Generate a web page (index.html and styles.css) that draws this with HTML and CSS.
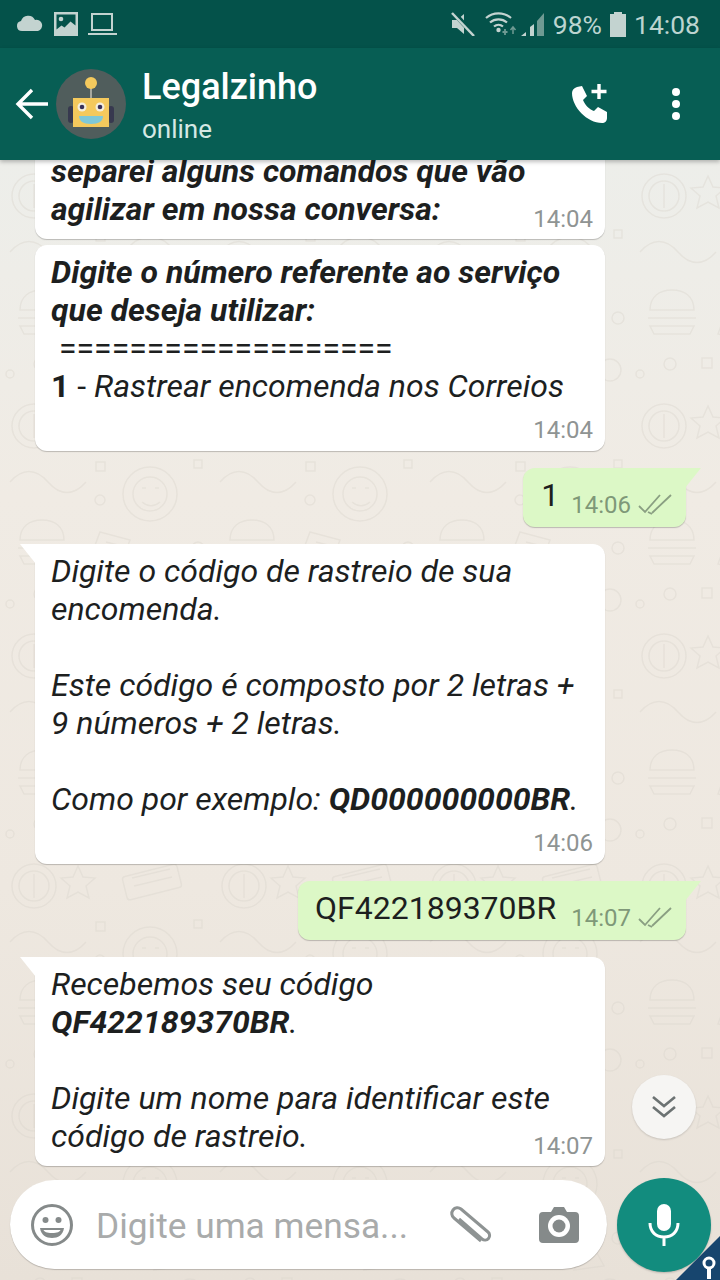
FILE: index.html
```html
<!DOCTYPE html>
<html lang="pt-BR">
<head>
  <meta charset="UTF-8">
  <meta name="viewport" content="width=device-width, initial-scale=1">
  <title>Legalzinho</title>
  <link rel="stylesheet" href="styles.css">
</head>
<body>

<div class="phone">
  <!-- status bar -->
  <div class="status-bar">
    <div class="status-left">
      <svg width="28" height="18" viewBox="0 0 28 18"><path d="M6 16a5 5 0 0 1-1-9.900A7.500 7.500 0 0 1 19 5a5.600 5.600 0 0 1 3 11z" fill="#c3d3d0"/></svg>
      <svg width="24" height="24" viewBox="0 0 24 24"><path d="M0 0h24v24H0z" fill="#c3d3d0"/><path d="M2.500 2.500h19v11l-5-4-6 6-3-2-5 4z" fill="#04524a"/><circle cx="7" cy="7" r="2.300" fill="#c3d3d0"/></svg>
      <svg width="29" height="24" viewBox="0 0 29 24"><path d="M4 2h20v16H4z" fill="none" stroke="#c3d3d0" stroke-width="2"/><path d="M0 22h29" stroke="#c3d3d0" stroke-width="2"/></svg>
    </div>
    <div class="status-right">
      <svg class="icon-mute" width="24" height="24" viewBox="0 0 24 24"><path d="M1 8h5l7-6v20l-7-6H1z" fill="#c3d3d0"/><path d="M2 0l21 23" stroke="#04524a" stroke-width="5"/><path d="M1 1l22 23" stroke="#c3d3d0" stroke-width="2.500"/></svg>
      <svg class="icon-wifi" width="32" height="26" viewBox="0 0 32 26"><g fill="none" stroke="#c3d3d0" stroke-width="2.200"><path d="M1 7a19 19 0 0 1 25 0"/><path d="M5 11.500a13 13 0 0 1 17 0"/><path d="M9 15.500a7 7 0 0 1 9 0"/></g><circle cx="13.500" cy="19" r="2.200" fill="#c3d3d0"/><path d="M20 18v6M17.500 21h5" stroke="#6f9a93" stroke-width="1.800"/><path d="M28 16v7M25.500 19l2.500-3 2.500 3" fill="none" stroke="#6f9a93" stroke-width="1.500"/></svg>
      <svg class="icon-signal" width="24" height="26" viewBox="0 0 24 26"><path d="M0 25l5-4v4z" fill="#c3d3d0"/><path d="M9 25v-9l4-3v12z" fill="#c3d3d0"/><path d="M16 25V10l7-8v23z" fill="#6f9a93"/></svg>
      <span class="status-text">98%</span>
      <svg class="icon-battery" width="16" height="25" viewBox="0 0 16 25"><path d="M4 2V0h8v2h4v23H0V2z" fill="#c3d3d0"/></svg>
      <span class="status-text">14:08</span>
    </div>
  </div>

  <!-- header -->
  <header class="app-bar">
    <svg class="back" width="34" height="34" viewBox="0 0 34 34"><path d="M33 17H3M17 3L3 17l14 14" fill="none" stroke="#fff" stroke-width="3.400"/></svg>
    <svg class="avatar" width="70" height="70" viewBox="0 0 70 70">
      <circle cx="35" cy="35" r="35" fill="#505d5c"/>
      <rect x="12" y="37" width="6" height="17" rx="3" fill="#37394f"/>
      <rect x="52" y="37" width="6" height="17" rx="3" fill="#37394f"/>
      <path d="M34 14h2v16h-2z" fill="#a7a89f"/>
      <circle cx="35" cy="14" r="6" fill="#f4c95d"/>
      <rect x="17" y="29" width="36" height="29" fill="#f4c95d"/>
      <circle cx="26" cy="38" r="4.500" fill="#f3eedd"/>
      <circle cx="44" cy="38" r="4.500" fill="#f3eedd"/>
      <circle cx="26" cy="38" r="2.300" fill="#37305a"/>
      <circle cx="44" cy="38" r="2.300" fill="#37305a"/>
      <path d="M23 47h24c0 5-4 8-12 8s-12-3-12-8z" fill="#7fc8d8"/>
    </svg>
    <div class="contact">
      <div class="contact-name">Legalzinho</div>
      <div class="contact-status">online</div>
    </div>
    <svg class="call" width="40" height="40" viewBox="0 0 40 40"><path d="M6 2l5-1 5 10-4 4c2 5 6 9 11 11l4-4 9 5v6c0 3-2 5-5 5C16 38 1 22 1 8c0-3 2-5 5-6z" fill="#fff" transform="translate(0 1)"/><path d="M28 0v15M20.500 7.500h15" stroke="#fff" stroke-width="3.400"/></svg>
    <div class="dots"><i></i><i></i><i></i></div>
  </header>

  <!-- chat -->
  <main class="chat">
    <svg class="doodles" width="720" height="1120" viewBox="0 0 720 1120">
      <defs>
        <pattern id="doodle" width="210" height="230" patternUnits="userSpaceOnUse">
          <g fill="none" stroke="#d8d3ca" stroke-width="1.500" opacity=".38">
            <circle cx="34" cy="36" r="22"/><circle cx="34" cy="36" r="15"/><path d="M34 24v24"/>
            <path d="M78 16l5 11 12 1-9 8 3 12-11-6-11 6 3-12-9-8 12-1z"/>
            <rect x="124" y="20" width="56" height="24" rx="3" transform="rotate(-14 152 32)"/>
            <path d="M132 28l38-9M134 36l38-9"/>
            <path d="M10 92c12-14 26-14 38 0s26 14 38 0"/>
            <circle cx="150" cy="104" r="27"/><circle cx="150" cy="104" r="17"/><path d="M142 98h4M155 98h4M142 112c6 5 12 5 18 0"/>
            <rect x="96" y="72" width="9" height="9"/><circle cx="100" cy="110" r="5"/><rect x="194" y="70" width="8" height="8"/>
            <path d="M20 150h44c0-14-10-20-22-20s-22 6-22 20zM18 158h48M20 166h44l-4 8H24z"/>
            <path d="M100 142l30 8-12 32-30-8zM106 152l16 4M103 162l16 4"/>
            <path d="M170 160l14 26-30 4z"/><circle cx="198" cy="158" r="6"/>
            <circle cx="40" cy="204" r="6"/><rect x="72" y="198" width="10" height="10"/>
            <path d="M110 212h52l8-12"/><path d="M116 222h42"/><circle cx="190" cy="210" r="11"/><circle cx="10" cy="214" r="4"/>
          </g>
        </pattern>
      </defs>
      <rect width="720" height="1120" fill="url(#doodle)"/>
    </svg>

    <div class="messages">
      <div class="msg in">
        <div class="msg-text"><b>separei alguns comandos que vão<br>agilizar em nossa conversa:</b></div>
        <div class="time inline">14:04</div>
      </div>
      <div class="msg in close">
        <div class="msg-text"><b>Digite o número referente ao serviço<br>que deseja utilizar:</b><br><span class="rule">&nbsp;===================</span><br><strong>1</strong> - <em>Rastrear encomenda nos Correios</em></div>
        <div class="time">14:04</div>
      </div>
      <div class="msg out short">
        <span class="msg-text plain">1</span>
        <span class="time">14:06</span>
        <svg class="ticks" width="34" height="24" viewBox="0 0 34 24"><path d="M1 13l6 6L22 2M14 20L33 2" fill="none" stroke="#8a9f82" stroke-width="1.800"/><path d="M10 19l4 2" stroke="#8a9f82" stroke-width="1.800"/></svg>
      </div>
      <div class="msg in tail">
        <div class="msg-text"><em>Digite o código de rastreio de sua<br>encomenda.<br><br>Este código é composto por 2 letras +<br>9 números + 2 letras.<br><br>Como por exemplo: <b>QD000000000BR</b>.</em></div>
        <div class="time">14:06</div>
      </div>
      <div class="msg out">
        <span class="msg-text plain">QF422189370BR</span>
        <span class="time">14:07</span>
        <svg class="ticks" width="34" height="24" viewBox="0 0 34 24"><path d="M1 13l6 6L22 2M14 20L33 2" fill="none" stroke="#8a9f82" stroke-width="1.800"/><path d="M10 19l4 2" stroke="#8a9f82" stroke-width="1.800"/></svg>
      </div>
      <div class="msg in tail">
        <div class="msg-text"><em>Recebemos seu código<br><b>QF422189370BR</b>.<br><br>Digite um nome para identificar este<br>código de rastreio.</em></div>
        <div class="time inline">14:07</div>
      </div>
    </div>

    <div class="composer">
      <div class="input">
        <svg width="42" height="42" viewBox="0 0 42 42"><circle cx="21" cy="21" r="19.500" fill="none" stroke="#858a8a" stroke-width="3"/><circle cx="14.500" cy="16" r="3" fill="#858a8a"/><circle cx="27.500" cy="16" r="3" fill="#858a8a"/><path d="M9 24h24c-1 7-6 10-12 10S10 31 9 24z" fill="#858a8a"/><path d="M12.500 26h17c-1 2-3 3-8.500 3s-7.500-1-8.500-3z" fill="#fff"/></svg>
        <span class="placeholder">Digite uma mensa...</span>
        <svg class="clip" width="44" height="40" viewBox="0 0 44 40"><path d="M33 36L6 13a5 5 0 0 1 7-9l27 23a4.500 4.500 0 0 1-6 7L11 14" fill="none" stroke="#8e9393" stroke-width="3"/></svg>
        <svg class="camera" width="42" height="38" viewBox="0 0 42 38"><path d="M5 6h8l3-5h10l3 5h8a4 4 0 0 1 4 4v23a4 4 0 0 1-4 4H5a4 4 0 0 1-4-4V10a4 4 0 0 1 4-4z" fill="#858a8a"/><circle cx="21" cy="20" r="11" fill="#fff"/><circle cx="21" cy="20" r="6.500" fill="#858a8a"/></svg>
      </div>
      <button class="mic">
        <svg width="32" height="42" viewBox="0 0 32 42"><rect x="9" y="0" width="14" height="27" rx="7" fill="#fff"/><path d="M2 19c0 9 6 14 14 14s14-5 14-14M16 33v9" fill="none" stroke="#fff" stroke-width="3"/></svg>
      </button>
    </div>

    <div class="scroll-down">
      <svg width="26" height="24" viewBox="0 0 26 24"><path d="M2 2l11 9 11-9M2 12l11 9 11-9" fill="none" stroke="#6c7272" stroke-width="2.600"/></svg>
    </div>
  </main>

  <div class="key-badge">
    <svg width="16" height="24" viewBox="0 0 16 24"><circle cx="8" cy="7" r="5" fill="none" stroke="#fff" stroke-width="3"/><path d="M8 12v11" stroke="#fff" stroke-width="4"/></svg>
  </div>
</div>

</body>
</html>
```

FILE: styles.css
```css
* {
  box-sizing: border-box;
}

body {
  margin: 0;
  font-family: Roboto, "Noto Sans", sans-serif;
}

.phone {
  position: relative;
  width: 720px;
  height: 1280px;
  display: flex;
  flex-direction: column;
  overflow: hidden;
}

/* Status bar */
.status-bar {
  height: 48px;
  flex: none;
  background: #04524a;
  display: flex;
  justify-content: space-between;
  align-items: center;
  padding: 0 20px 0 16px;
}

.status-left {
  display: flex;
  align-items: center;
  gap: 10px;
}

.status-right {
  display: flex;
  align-items: center;
  gap: 8px;
}

.status-text {
  color: #bcd4d0;
  font-size: 26.500px;
}

.icon-mute {
  margin-right: 2px;
}

.icon-wifi {
  margin-right: -4px;
}

/* App bar */
.app-bar {
  position: relative;
  z-index: 2;
  height: 112px;
  flex: none;
  background: #075e54;
  display: flex;
  align-items: center;
  padding: 0 0 0 15px;
  box-shadow: 0 2px 4px rgba(0, 0, 0, 0.25);
}

.back {
  margin-right: 7px;
}

.avatar {
  flex: none;
  margin-right: 16px;
}

.contact {
  flex: 1;
  padding-top: 3px;
}

.contact-name {
  color: #fff;
  font-size: 36px;
  font-weight: 500;
  line-height: 42px;
  margin-bottom: 4px;
}

.contact-status {
  color: #d5e8e4;
  font-size: 26px;
  line-height: 34px;
}

.call {
  margin-right: 61px;
}

.dots {
  display: flex;
  flex-direction: column;
  gap: 4px;
  margin-right: 40px;
}

.dots i {
  display: block;
  width: 8px;
  height: 8px;
  border-radius: 50%;
  background: #fff;
}

/* Chat */
.chat {
  position: relative;
  flex: 1;
  min-height: 0;
  display: flex;
  flex-direction: column;
  background: linear-gradient(180deg, #edeeea 0%, #f0ebe4 30%, #eee8e0 65%, #e8e1d8 100%);
}

.doodles {
  position: absolute;
  top: 0;
  left: 0;
}

.messages {
  position: relative;
  flex: 1;
  min-height: 0;
  display: flex;
  flex-direction: column;
  justify-content: flex-end;
  overflow: hidden;
  padding: 0 34px 14px 35px;
}

.msg {
  position: relative;
  flex: none;
  background: #fff;
  border-radius: 12px;
  box-shadow: 0 1px 1px rgba(0, 0, 0, 0.22);
  color: #1d1f1f;
  font-size: 32px;
  line-height: 38px;
}

.msg.in {
  width: 570px;
  padding: 8px 12px 10px 16px;
  margin-top: 17px;
}

.msg.in.close {
  margin-top: 6px;
}

.msg.out {
  align-self: flex-end;
  background: #dcf8c6;
  height: 59px;
  display: flex;
  align-items: flex-start;
  padding: 8px 14px 0 17px;
  margin-top: 17px;
  border-top-right-radius: 0;
}

.msg.tail {
  border-top-left-radius: 0;
}

/* Bubble tails */
.msg.tail::before,
.msg.out::before {
  content: "";
  position: absolute;
  top: 0;
  width: 16px;
  height: 20px;
}

.msg.tail::before {
  left: -15px;
  background: #fff;
  clip-path: polygon(0 0, 100% 0, 100% 100%);
}

.msg.out::before {
  right: -15px;
  background: #dcf8c6;
  clip-path: polygon(0 0, 100% 0, 0 100%);
}

.msg b,
.msg strong {
  font-weight: 700;
}

.msg .msg-text b {
  font-style: italic;
}

.time {
  color: #8f9493;
  font-size: 24px;
  line-height: 24px;
  text-align: right;
  margin-top: 13px;
  margin-bottom: -1px;
}

.time.inline {
  margin-top: -21px;
  margin-bottom: -2px;
}

.msg.out .time {
  color: #7f9878;
  margin: 17px 0 0 15px;
}

.msg.out.short {
  padding-left: 18px;
}

.msg.out.short .time {
  margin-left: 12px;
}

.ticks {
  margin: 17px 0 0 7px;
}

/* Composer */
.composer {
  position: relative;
  flex: none;
  display: flex;
  align-items: center;
  justify-content: space-between;
  height: 89px;
  margin: 0 9px 11px 10px;
}

.input {
  width: 597px;
  height: 89px;
  background: #fff;
  border-radius: 45px;
  box-shadow: 0 1px 1px rgba(0, 0, 0, 0.2);
  display: flex;
  align-items: center;
  padding: 0 27px 0 21px;
}

.placeholder {
  flex: 1;
  margin-left: 23px;
  padding-top: 3px;
  color: #a9abab;
  font-size: 35.300px;
}

.clip {
  margin-right: 46px;
}

.mic {
  width: 94px;
  height: 94px;
  border: none;
  padding: 0;
  border-radius: 50%;
  background: #128c7e;
  display: flex;
  align-items: center;
  justify-content: center;
  box-shadow: 0 1px 2px rgba(0, 0, 0, 0.2);
}

/* Floating bits */
.scroll-down {
  position: absolute;
  left: 632px;
  top: 915px;
  width: 64px;
  height: 64px;
  border-radius: 50%;
  background: #f6f5f3;
  display: flex;
  align-items: center;
  justify-content: center;
  box-shadow: 0 1px 2px rgba(0, 0, 0, 0.15);
}

.key-badge {
  position: absolute;
  right: 0;
  bottom: 0;
  width: 44px;
  height: 44px;
  background: #17456e;
  clip-path: polygon(100% 0, 100% 100%, 0 100%);
  display: flex;
  align-items: flex-end;
  justify-content: flex-end;
  padding: 0 3px 0 0;
}
```
